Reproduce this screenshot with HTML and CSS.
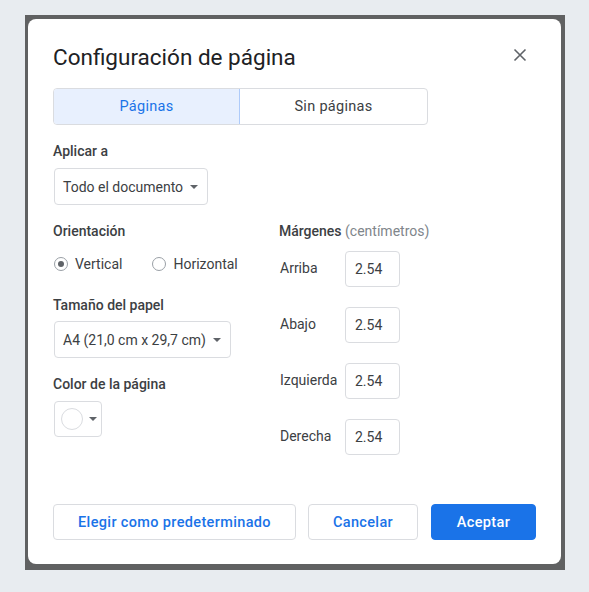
FILE: index.html
```html
<!DOCTYPE html>
<html lang="es">
<head>
<meta charset="utf-8">
<title>Configuración de página</title>
<link rel="stylesheet" href="styles.css">
</head>
<body>
<div class="backdrop">
  <div class="dialog">
    <div class="header">
      <h1 class="title">Configuración de página</h1>
      <button class="close" aria-label="Cerrar">
        <svg width="14" height="14" viewBox="0 0 14 14"><path d="M1.5 1.5L12.5 12.5M12.5 1.5L1.5 12.5" stroke="#5f6368" stroke-width="1.6" fill="none"/></svg>
      </button>
    </div>

    <div class="tabs">
      <div class="tab active">Páginas</div>
      <div class="tab">Sin páginas</div>
    </div>

    <div class="label apply-label">Aplicar a</div>
    <div class="select">Todo el documento <span class="caret"></span></div>

    <div class="columns">
      <div class="col-left">
        <div class="label">Orientación</div>
        <div class="radios">
          <label class="radio"><span class="dot checked"></span>Vertical</label>
          <label class="radio"><span class="dot"></span>Horizontal</label>
        </div>
        <div class="label paper-label">Tamaño del papel</div>
        <div class="select">A4 (21,0 cm x 29,7 cm) <span class="caret"></span></div>
        <div class="label color-label">Color de la página</div>
        <div class="swatch"><span class="circle"></span><span class="caret"></span></div>
      </div>
      <div class="col-right">
        <div class="label">Márgenes <span class="muted">(centímetros)</span></div>
        <div class="margins">
          <div class="mrow"><span class="mlabel">Arriba</span><span class="input">2.54</span></div>
          <div class="mrow"><span class="mlabel">Abajo</span><span class="input">2.54</span></div>
          <div class="mrow"><span class="mlabel">Izquierda</span><span class="input">2.54</span></div>
          <div class="mrow"><span class="mlabel">Derecha</span><span class="input">2.54</span></div>
        </div>
      </div>
    </div>

    <div class="footer">
      <button class="btn outline wide">Elegir como predeterminado</button>
      <button class="btn outline cancel">Cancelar</button>
      <button class="btn primary">Aceptar</button>
    </div>
  </div>
</div>
</body>
</html>
```
FILE: styles.css
```css
* { box-sizing: border-box; }
html, body { margin: 0; padding: 0; }
body {
  background: #e8ecf0;
  font-family: Roboto, "Liberation Sans", Arial, sans-serif;
  color: #3c4043;
  width: 589px;
  height: 592px;
  overflow: hidden;
}
.backdrop {
  margin: 15px 0 0 25px;
  width: 540px;
  height: 555px;
  background: #606162;
  padding: 4px 4px 6px 3px;
}
.dialog {
  background: #fff;
  border-radius: 8px;
  height: 545px;
  padding: 24px 25px 24px 25px;
  display: flex;
  flex-direction: column;
}
.header {
  display: flex;
  align-items: center;
  justify-content: space-between;
  height: 28px;
}
.title {
  margin: 0;
  font-size: 22.5px;
  line-height: 28px;
  font-weight: 400;
  color: #202124;
}
.close {
  border: 0;
  background: none;
  padding: 0;
  width: 14px;
  height: 14px;
  margin-right: 9px;
  margin-top: -4px;
  display: flex;
}
.tabs {
  margin-top: 17px;
  display: flex;
  width: 375px;
  height: 37px;
  border: 1px solid #dadce0;
  border-radius: 4px;
  overflow: hidden;
}
.tab {
  flex: 1;
  display: flex;
  align-items: center;
  justify-content: center;
  font-size: 14.5px;
  letter-spacing: 0.3px;
  color: #3c4043;
}
.tab.active {
  background: #e8f0fe;
  color: #1a73e8;
  box-shadow: inset 0 0 0 1px #aecbfa;
  margin: -1px 0 -1px -1px;
}
.label {
  font-size: 14px;
  line-height: 20px;
  font-weight: 500;
  color: #3c4043;
}
.muted { color: #80868b; font-weight: 400; }
.apply-label { margin-top: 16px; }
.select {
  margin-top: 7px;
  margin-left: 1px;
  align-self: flex-start;
  height: 37px;
  border: 1px solid #dadce0;
  border-radius: 4px;
  display: flex;
  align-items: center;
  padding: 0 9px 0 8px;
  font-size: 14px;
  color: #3c4043;
  gap: 7px;
}
.caret {
  width: 0;
  height: 0;
  border-left: 4px solid transparent;
  border-right: 4px solid transparent;
  border-top: 4px solid #5f6368;
}
.columns {
  margin-top: 16px;
  display: flex;
}
.col-left {
  width: 226px;
  display: flex;
  flex-direction: column;
}
.col-right {
  display: flex;
  flex-direction: column;
}
.radios {
  margin-top: 13px;
  display: flex;
  gap: 29px;
  height: 20px;
  align-items: center;
}
.radio {
  display: flex;
  align-items: center;
  font-size: 14px;
  color: #3c4043;
  gap: 7px;
}
.dot {
  width: 14px;
  height: 14px;
  border-radius: 50%;
  border: 1px solid #9aa0a6;
  display: flex;
  align-items: center;
  justify-content: center;
  margin-left: 1px;
}
.dot.checked::after {
  content: "";
  width: 6px;
  height: 6px;
  border-radius: 50%;
  background: #5f6368;
}
.paper-label { margin-top: 21px; }
.paper-label + .select { margin-top: 6px; }
.color-label { margin-top: 16px; }
.swatch {
  margin-top: 7px;
  margin-left: 1px;
  width: 48px;
  height: 36px;
  border: 1px solid #dadce0;
  border-radius: 4px;
  display: flex;
  align-items: center;
  padding-left: 6px;
  gap: 6px;
  align-self: flex-start;
}
.circle {
  width: 22px;
  height: 22px;
  border-radius: 50%;
  border: 1px solid #dadce0;
  background: #fff;
}
.margins {
  margin-top: 10px;
  display: flex;
  flex-direction: column;
  gap: 20px;
}
.mrow {
  display: flex;
  align-items: center;
}
.mlabel {
  width: 66px;
  font-size: 14px;
  color: #3c4043;
  padding-left: 1px;
  margin-top: -2px;
}
.input {
  width: 55px;
  height: 36px;
  border: 1px solid #dadce0;
  border-radius: 4px;
  display: flex;
  align-items: center;
  padding-left: 9px;
  font-size: 14px;
  color: #3c4043;
}
.footer {
  margin-top: auto;
  display: flex;
  gap: 12px;
}
.btn {
  height: 36px;
  border-radius: 4px;
  font-family: Roboto, "Liberation Sans", Arial, sans-serif;
  font-size: 14.5px;
  letter-spacing: 0.35px;
  font-weight: 500;
  padding: 0;
  cursor: pointer;
}
.outline {
  background: #fff;
  border: 1px solid #dadce0;
  color: #1a73e8;
}
.wide { width: 243px; }
.cancel { width: 110px; }
.primary {
  margin-left: 1px;
  width: 105px;
  background: #1a73e8;
  border: 1px solid #1a73e8;
  color: #fff;
}
```
